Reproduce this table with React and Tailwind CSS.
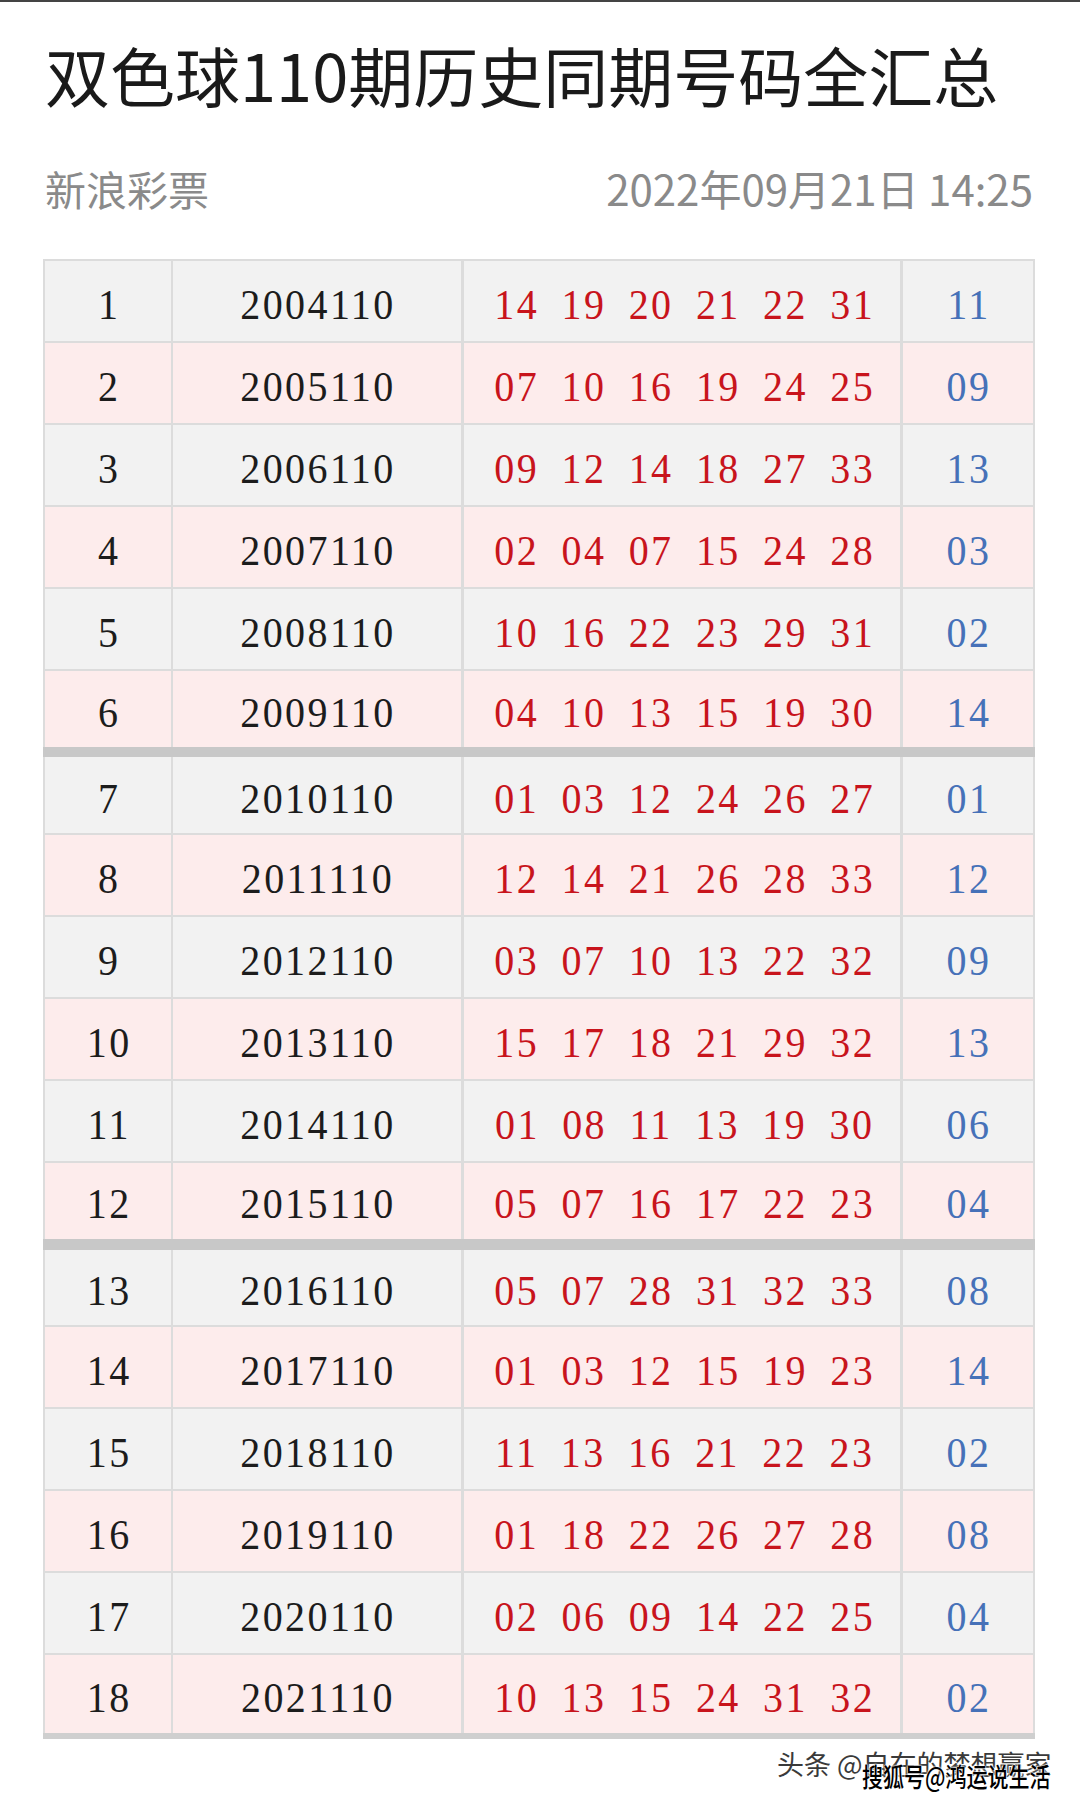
import React from 'react';

const rows = [
  ['1', '2004110', '14 19 20 21 22 31', '11'],
  ['2', '2005110', '07 10 16 19 24 25', '09'],
  ['3', '2006110', '09 12 14 18 27 33', '13'],
  ['4', '2007110', '02 04 07 15 24 28', '03'],
  ['5', '2008110', '10 16 22 23 29 31', '02'],
  ['6', '2009110', '04 10 13 15 19 30', '14'],
  ['7', '2010110', '01 03 12 24 26 27', '01'],
  ['8', '2011110', '12 14 21 26 28 33', '12'],
  ['9', '2012110', '03 07 10 13 22 32', '09'],
  ['10', '2013110', '15 17 18 21 29 32', '13'],
  ['11', '2014110', '01 08 11 13 19 30', '06'],
  ['12', '2015110', '05 07 16 17 22 23', '04'],
  ['13', '2016110', '05 07 28 31 32 33', '08'],
  ['14', '2017110', '01 03 12 15 19 23', '14'],
  ['15', '2018110', '11 13 16 21 22 23', '02'],
  ['16', '2019110', '01 18 22 26 27 28', '08'],
  ['17', '2020110', '02 06 09 14 22 25', '04'],
  ['18', '2021110', '10 13 15 24 31 32', '02'],
];

const cjk = { fontFamily: '"Noto Sans CJK SC", "Noto Sans", sans-serif' };
const serif = { fontFamily: '"Liberation Serif", "DejaVu Serif", serif' };

const Num = ({ children, className }) => (
  <span className={`inline-block pt-[7px] tracking-[2.4px] indent-[2.4px] scale-y-[1.06] ${className}`}>{children}</span>
);

export default function App() {
  return (
    <div className="relative h-[1803px] w-[1080px] overflow-hidden bg-white" style={cjk}>
      <div className="h-[2px] bg-[#444]" />
      <div className="pl-[45px] pr-[47px]">
        <h1 className="mt-[40px] text-[65px] leading-none font-normal text-[#1a1a1a] whitespace-nowrap">
          双色球110期历史同期号码全汇总
        </h1>
        <div className="mt-[60px] flex items-baseline justify-between leading-none">
          <span className="text-[41px] text-[#8a8a8a]">新浪彩票</span>
          <span className="text-[42px] text-[#8a8a8a]">2022年09月21日 14:25</span>
        </div>

        <table className="mt-[50px] w-[990px] -ml-[2px] border-collapse table-fixed border-2 border-[#dcdcdc] text-[40px] leading-none" style={serif}>
          <colgroup>
            <col className="w-[128px]" />
            <col className="w-[290px]" />
            <col className="w-[439px]" />
            <col className="w-[133px]" />
          </colgroup>
          <tbody>
            {rows.map((r, i) => {
              const pink = i % 2 === 1;
              const bg = pink ? 'bg-[#fdecec]' : 'bg-[#f2f2f2]';
              let bb = 'border-b-2';
              if (i === 5) bb = 'border-b-[10px] border-b-[#c8c8c8]';
              if (i === 11) bb = 'border-b-[11px] border-b-[#c8c8c8]';
              if (i === 17) bb = 'border-b-[6px] border-b-[#cfcfcf]';
              const cell = `h-[82px] p-0 text-center align-middle border-x-2 border-t-2 border-[#dcdcdc] ${bb} ${bg}`;
              return (
                <tr key={r[0]}>
                  <td className={cell}><Num className="text-[#1c1c1c]">{r[0]}</Num></td>
                  <td className={cell}><Num className="text-[#1c1c1c]">{r[1]}</Num></td>
                  <td className={`${cell} border-l-[3px]`}>
                    <div className="flex justify-center gap-[20px] pl-[4px]">
                      {r[2].split(' ').map((n, k) => (
                        <Num key={k} className="text-[#c8141c]">{n}</Num>
                      ))}
                    </div>
                  </td>
                  <td className={`${cell} border-l-[3px]`}><Num className="text-[#4671b8]">{r[3]}</Num></td>
                </tr>
              );
            })}
          </tbody>
        </table>
      </div>

      {/* watermarks */}
      <div className="absolute left-[777px] top-[1750px] text-[27px] leading-none text-[#3a3a3a] whitespace-nowrap [text-shadow:0_0_2px_#fff,0_0_2px_#fff]">
        头条 @自在的梦想赢家
      </div>
      <div className="absolute left-[862px] top-[1763px] origin-top-left scale-y-[1.25] text-[21px] leading-none font-medium text-black whitespace-nowrap [text-shadow:0_0_2px_#fff,0_0_2px_#fff,0_0_1px_#fff]">
        搜狐号@鸿运说生活
      </div>
    </div>
  );
}
